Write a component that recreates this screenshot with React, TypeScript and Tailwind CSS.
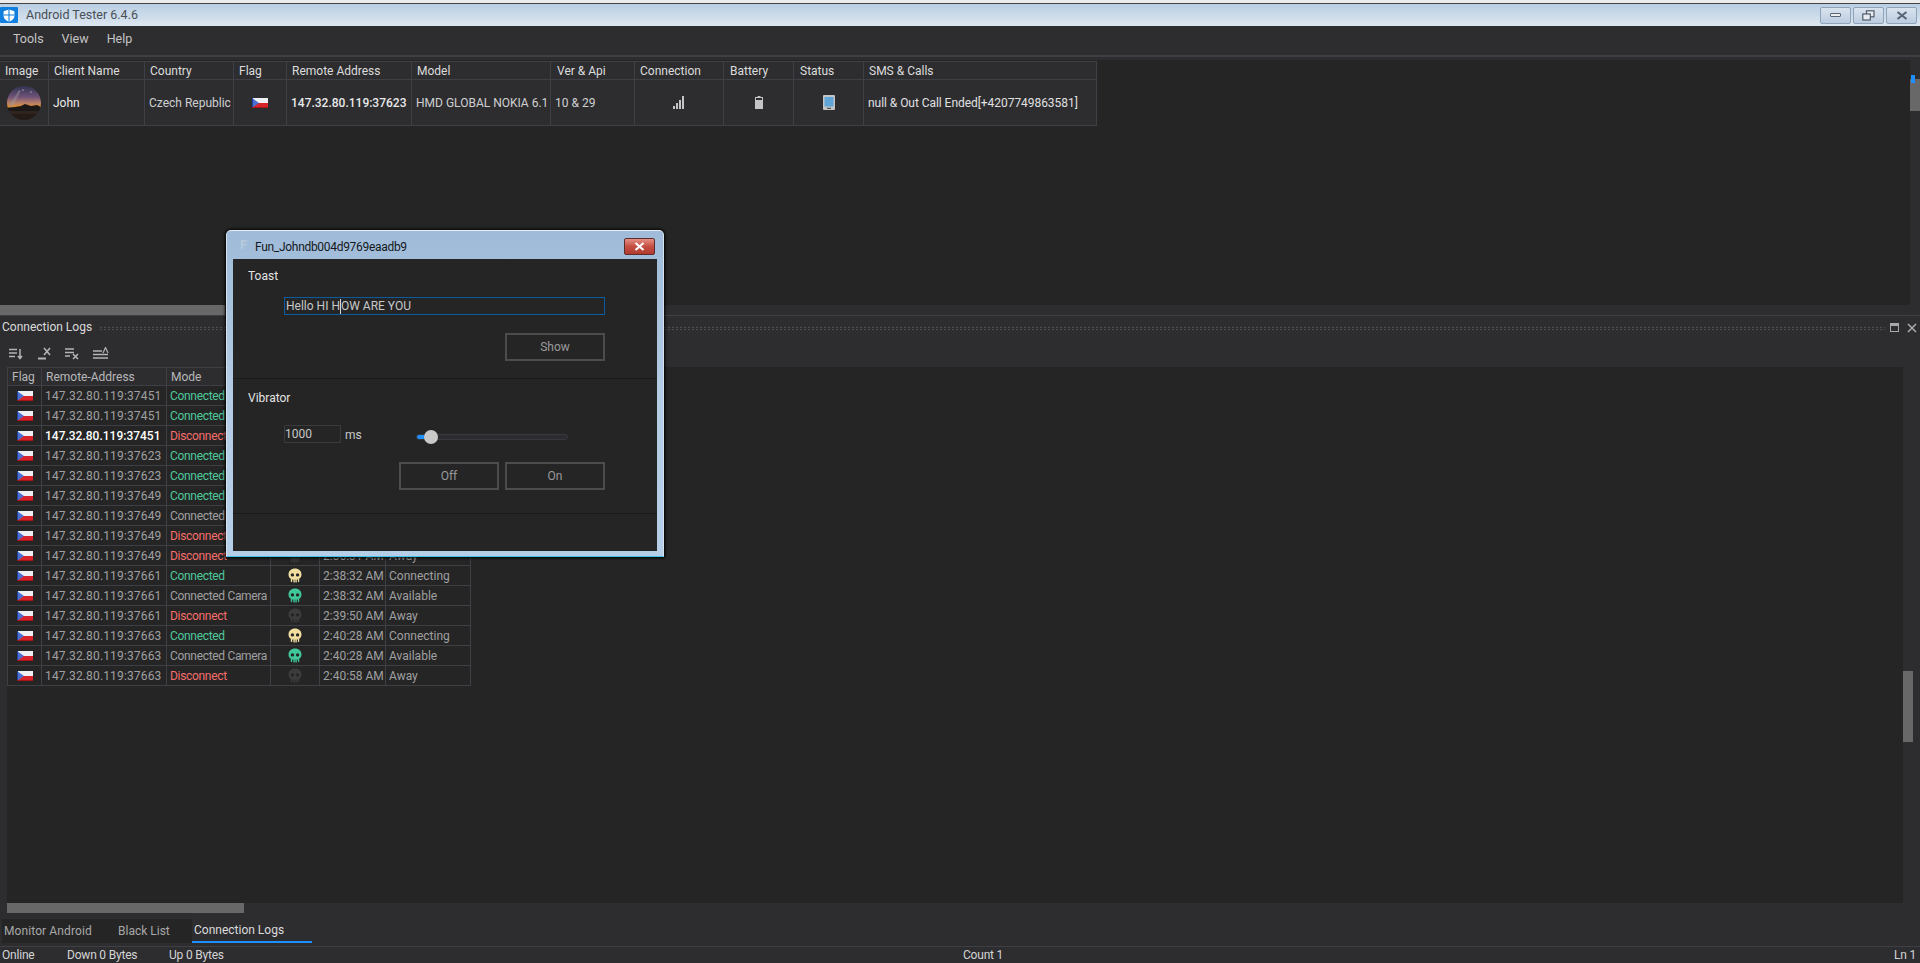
import { Fragment } from 'react'

const HEAD_COLS = [
  { label: 'Image', pad: 'pl-[5px]' },
  { label: 'Client Name', pad: 'pl-[5px]' },
  { label: 'Country', pad: 'pl-[5px]' },
  { label: 'Flag', pad: 'pl-[5px]' },
  { label: 'Remote Address', pad: 'pl-[5px]' },
  { label: 'Model', pad: 'pl-[5px]' },
  { label: 'Ver & Api', pad: 'pl-[6px]' },
  { label: 'Connection', pad: 'pl-[5px]' },
  { label: 'Battery', pad: 'pl-[6px]' },
  { label: 'Status', pad: 'pl-[6px]' },
  { label: 'SMS & Calls', pad: 'pl-[5px]' },
]

const LOG_COLS = ['Flag', 'Remote-Address', 'Mode', '', '', '']

type Log = { addr: string; mode: 'on' | 'cam' | 'off'; time: string; state: string; bold?: boolean }

const LOGS: Log[] = [
  { addr: '37451', mode: 'on', time: '2:31:08 AM', state: 'Connecting' },
  { addr: '37451', mode: 'on', time: '2:31:08 AM', state: 'Connecting' },
  { addr: '37451', mode: 'off', time: '2:32:14 AM', state: 'Away', bold: true },
  { addr: '37623', mode: 'on', time: '2:33:40 AM', state: 'Connecting' },
  { addr: '37623', mode: 'on', time: '2:33:40 AM', state: 'Connecting' },
  { addr: '37649', mode: 'on', time: '2:35:02 AM', state: 'Connecting' },
  { addr: '37649', mode: 'cam', time: '2:35:02 AM', state: 'Available' },
  { addr: '37649', mode: 'off', time: '2:35:58 AM', state: 'Away' },
  { addr: '37649', mode: 'off', time: '2:36:31 AM', state: 'Away' },
  { addr: '37661', mode: 'on', time: '2:38:32 AM', state: 'Connecting' },
  { addr: '37661', mode: 'cam', time: '2:38:32 AM', state: 'Available' },
  { addr: '37661', mode: 'off', time: '2:39:50 AM', state: 'Away' },
  { addr: '37663', mode: 'on', time: '2:40:28 AM', state: 'Connecting' },
  { addr: '37663', mode: 'cam', time: '2:40:28 AM', state: 'Available' },
  { addr: '37663', mode: 'off', time: '2:40:58 AM', state: 'Away' },
]

function Flag() {
  return (
    <svg width="16" height="12" viewBox="0 0 16 12">
      <rect x="0" y="1" width="16" height="5" fill="#eef0f4" />
      <rect x="0" y="6" width="16" height="5" fill="#d8232a" />
      <path d="M0 1 L7 6 L0 11 Z" fill="#4a6fd0" />
      <rect x="0" y="1" width="1" height="10" fill="#1f3f9c" />
      <rect x="0" y="10" width="16" height="1" fill="#a81418" />
    </svg>
  )
}

function Skull({ color }: { color: string }) {
  return (
    <svg width="14" height="15" viewBox="0 0 14 15">
      <path
        fillRule="evenodd"
        fill={color}
        d="M7 0.5C3.2 0.5 0.5 3 0.5 6.5C0.5 8.6 1.5 10 2.8 10.8V13.4C2.8 14.2 4.2 14.2 4.2 13.4V11.6H5.4V14C5.4 14.8 6.8 14.8 6.8 14V11.6H7.4V14C7.4 14.8 8.8 14.8 8.8 14V11.6H9.9V13.4C9.9 14.2 11.2 14.2 11.2 13.4V10.8C12.5 10 13.5 8.6 13.5 6.5C13.5 3 10.8 0.5 7 0.5ZM4.4 5.2A1.7 1.7 0 1 1 4.4 8.6A1.7 1.7 0 1 1 4.4 5.2ZM9.6 5.2A1.7 1.7 0 1 1 9.6 8.6A1.7 1.7 0 1 1 9.6 5.2Z"
      />
    </svg>
  )
}

function Avatar() {
  return (
    <svg width="34" height="34" viewBox="0 0 34 34">
      <defs>
        <linearGradient id="sky" x1="0" y1="0" x2="0" y2="1">
          <stop offset="0" stopColor="#2f3350" />
          <stop offset="0.32" stopColor="#6f5278" />
          <stop offset="0.5" stopColor="#b77f68" />
          <stop offset="0.6" stopColor="#d98c36" />
          <stop offset="0.7" stopColor="#2c2320" />
          <stop offset="1" stopColor="#3a281e" />
        </linearGradient>
        <clipPath id="disc">
          <circle cx="17" cy="17" r="17" />
        </clipPath>
      </defs>
      <g clipPath="url(#disc)">
        <rect width="34" height="34" fill="url(#sky)" />
        <path d="M2 20 L12 4 L14 5 L5 21 Z" fill="#9a9aa0" opacity="0.45" />
        <path d="M0 22 L8 21 L14 20 L18 18 L24 20 L30 19 L34 21 V25 H0 Z" fill="#1c1818" />
        <rect x="0" y="28" width="34" height="6" fill="#241a16" />
        <circle cx="16" cy="4" r="0.6" fill="#fff" />
        <circle cx="24" cy="6" r="0.6" fill="#fff" />
      </g>
    </svg>
  )
}

function LogToolbarIcons() {
  return (
    <div className="flex h-[27px] items-start pl-[9px] pt-[6px]">
      <svg width="14" height="14" viewBox="0 0 14 14" className="text-[#b4b4b4]" stroke="currentColor" fill="none">
        <path d="M0 3.5H8M0 7H8M0 10.5H6M11 3V12M9 10L11 12.5L13 10" strokeWidth="1.5" />
      </svg>
      <svg width="14" height="14" viewBox="0 0 14 14" className="ml-[15px] text-[#b4b4b4]" stroke="currentColor" fill="none">
        <path d="M0 12.5H8" strokeWidth="2" />
        <path d="M6 2L12 9M12 2L6 9" strokeWidth="1.6" />
      </svg>
      <svg width="15" height="14" viewBox="0 0 15 14" className="ml-[13px] text-[#b4b4b4]" stroke="currentColor" fill="none">
        <path d="M0 3H9M0 6.5H9M0 10H5" strokeWidth="1.5" />
        <path d="M8 8L13 13M13 8L8 13" strokeWidth="1.6" />
      </svg>
      <svg width="16" height="14" viewBox="0 0 16 14" className="ml-[13px] mt-[1px] text-[#b4b4b4]" stroke="currentColor" fill="none">
        <path d="M0 4H9M0 7.5H15M0 11H15" strokeWidth="1.5" />
        <path d="M10 6L12.5 0.5L15 6" strokeWidth="1.2" />
      </svg>
    </div>
  )
}

function WinButton({ children }: { children: React.ReactNode }) {
  return (
    <div className="flex h-[17px] w-[31px] items-center justify-center rounded-[2px] border border-[#8fa3bb] bg-gradient-to-b from-[#d9e3ee] to-[#bccde0]">
      {children}
    </div>
  )
}

function DialogButton({ label }: { label: string }) {
  return (
    <div className="flex h-[28px] w-[100px] items-center justify-center border-2 border-[#4c4c4c] text-[#9a9a9a]">{label}</div>
  )
}

function FunDialog() {
  return (
    <div className="absolute left-[226px] top-[230px] h-[327px] w-[438px] rounded-t-[5px] border border-t-[#e8eef5] border-x-[#d5e2ef] border-b-[#3fc3e8] bg-gradient-to-b from-[#9fbbd9] via-[#b4cce4] to-[#b6cfe8] px-[6px] shadow-[0_0_3px_1px_#000]">
      <div className="flex h-[28px] items-center">
        <span className="ml-[7px] w-[15px] text-[13px] font-bold text-[#b7c9dc]">F</span>
        <span className="mt-[4px] text-[12px] tracking-[-0.3px] text-[#15181c]">Fun_Johndb004d9769eaadb9</span>
        <div className="ml-auto mr-[2px] mt-[2px] flex h-[17px] w-[31px] items-center justify-center rounded-[2px] border border-[#5c2b2b] bg-gradient-to-b from-[#e58f85] via-[#c44f42] to-[#b23a2e]">
          <svg width="11" height="9" viewBox="0 0 11 9" stroke="#fff" strokeWidth="2.2">
            <path d="M1.5 1L9.5 8M9.5 1L1.5 8" />
          </svg>
        </div>
      </div>
      <div className="flex h-[292px] flex-col bg-[#252526] text-[12px]">
        <section className="h-[120px] border-b border-[#1a1a1b]">
          <div className="ml-[15px] mt-[9px] h-[16px] leading-[16px] text-[#e4e4e4]">Toast</div>
          <div className="ml-[51px] mt-[13px] flex h-[18px] w-[321px] items-center border border-[#0b5c9e] pl-[1px] text-[#c8c8c8]">
            Hello HI H<span className="h-[15px] w-0 border-l border-[#d8d8d8]" />OW ARE YOU
          </div>
          <div className="ml-[272px] mt-[18px]">
            <DialogButton label="Show" />
          </div>
        </section>
        <section className="h-[135px] border-b border-[#1a1a1b]">
          <div className="ml-[15px] mt-[11px] h-[16px] leading-[16px] text-[#e4e4e4]">Vibrator</div>
          <div className="ml-[51px] mt-[19px] flex h-[18px] items-center">
            <div className="flex h-[18px] w-[57px] items-center border border-[#3a3a3c] text-[#c8c8c8]">1000</div>
            <span className="w-[75px] pl-[4px] pt-[2px] text-[#c8c8c8]">ms</span>
            <div className="relative mt-[6px] h-[6px] w-[152px] rounded-full border border-[#38383e] bg-[#2b2b30]">
              <div className="h-full w-[10px] rounded-l-full bg-[#1e8fff]" />
              <div className="absolute left-[7px] top-[-5px] h-[14px] w-[14px] rounded-full bg-[#c9c9c9]" />
            </div>
          </div>
          <div className="ml-[166px] mt-[19px] flex gap-[6px]">
            <DialogButton label="Off" />
            <DialogButton label="On" />
          </div>
        </section>
      </div>
    </div>
  )
}

export default function App() {
  return (
    <div className="relative flex h-screen w-full flex-col overflow-hidden bg-[#2d2d30] font-['Roboto',sans-serif] text-[12px] text-[#d0d0d0]">
      {/* window frame */}
      <div className="h-[4px] border-b border-[#444] bg-[#ececec]" />
      <div className="flex h-[22px] items-center bg-gradient-to-b from-[#b9cee3] to-[#dde7f0] pr-[3px]">
        <div className="flex h-[16px] w-[18px] items-center justify-center rounded-[1px] bg-[#0f7fe0]">
          <svg width="12" height="13" viewBox="0 0 11 12">
            <path d="M5.5 0.5L10.5 2V6C10.5 9 8 11 5.5 11.7C3 11 0.5 9 0.5 6V2Z" fill="#fff" />
            <path d="M5 0.5H6V11.7H5ZM0.5 5H10.5V6H0.5Z" fill="#0f7fe0" />
          </svg>
        </div>
        <span className="ml-[8px] text-[12.5px] text-[#4a4f55]">Android Tester 6.4.6</span>
        <div className="ml-auto flex gap-[2px]">
          <WinButton>
            <div className="h-[4px] w-[11px] rounded-[1px] border border-[#5a6675] bg-[#eee]" />
          </WinButton>
          <WinButton>
            <svg width="13" height="11" viewBox="0 0 13 11" fill="none" stroke="#4f5a68" strokeWidth="1.2">
              <rect x="4.5" y="0.8" width="7.5" height="6" fill="#e8edf3" />
              <rect x="0.8" y="4" width="7.5" height="6" fill="#e8edf3" />
            </svg>
          </WinButton>
          <WinButton>
            <svg width="12" height="9" viewBox="0 0 12 9" stroke="#5a6675" strokeWidth="2.2">
              <path d="M1.5 1L10.5 8M10.5 1L1.5 8" />
            </svg>
          </WinButton>
        </div>
      </div>

      {/* menu */}
      <div className="flex h-[29px] items-center gap-[18px] pl-[13px] pb-[3px] text-[12.5px] text-[#c4c4c4]">
        <span>Tools</span>
        <span>View</span>
        <span>Help</span>
      </div>
      <div className="h-[2px] bg-[#3f3f46]" />
      <div className="h-[3px]" />

      {/* clients panel */}
      <div className="flex h-[245px]">
        <div className="w-[1910px] bg-[#252526] pt-[1px]">
          <div className="grid w-[1097px] grid-cols-[49px_96px_89px_53px_125px_139px_84px_89px_70px_70px_233px] whitespace-nowrap border-y border-[#3f3f46] bg-[#2d2d30]">
            {HEAD_COLS.map((col) => (
              <div key={col.label} className={`flex h-[18px] items-center border-b border-r border-[#3f3f46] ${col.pad} text-[#dcdcdc]`}>
                {col.label}
              </div>
            ))}
            <div className="flex h-[45px] items-center justify-center border-r border-[#3f3f46]">
              <Avatar />
            </div>
            <div className="flex items-center border-r border-[#3f3f46] pl-[4px] text-[#ececec]">John</div>
            <div className="flex items-center border-r border-[#3f3f46] pl-[4px] text-[#d0d0d0]">Czech Republic</div>
            <div className="flex items-center justify-center border-r border-[#3f3f46]">
              <Flag />
            </div>
            <div className="flex items-center border-r border-[#3f3f46] pl-[4px] font-medium text-[#e8e8e8]">147.32.80.119:37623</div>
            <div className="flex items-center border-r border-[#3f3f46] pl-[4px] text-[#d0d0d0]">HMD GLOBAL NOKIA 6.1</div>
            <div className="flex items-center border-r border-[#3f3f46] pl-[4px] text-[#d0d0d0]">10 &amp; 29</div>
            <div className="flex items-center justify-center border-r border-[#3f3f46]">
              <svg width="12" height="13" viewBox="0 0 12 13" fill="#c4c4c4">
                <rect x="0" y="10" width="2" height="3" />
                <rect x="3" y="7" width="2" height="6" />
                <rect x="6" y="4" width="2" height="9" />
                <rect x="9" y="0" width="2" height="13" />
              </svg>
            </div>
            <div className="flex items-center justify-center border-r border-[#3f3f46]">
              <svg width="8" height="13" viewBox="0 0 8 13" fill="#c4c4c4">
                <rect x="2.5" y="0" width="3" height="1" />
                <path fillRule="evenodd" d="M0 1H8V13H0ZM1 2V4H7V2Z" />
              </svg>
            </div>
            <div className="flex items-center justify-center border-r border-[#3f3f46]">
              <svg width="12" height="15" viewBox="0 0 12 15">
                <rect width="12" height="15" rx="1" fill="#c4c4c4" />
                <rect x="1.5" y="2" width="9" height="9.5" fill="#5fa5d8" />
                <rect x="4" y="12.8" width="4" height="1" fill="#333" />
              </svg>
            </div>
            <div className="flex items-center border-r border-[#3f3f46] pl-[4px] tracking-[-0.05px] text-[#e0e0e0]">null &amp; Out Call Ended[+4207749863581]</div>
          </div>
        </div>
        <div className="relative w-[10px]">
          <div className="mt-[19px] h-[32px] bg-[#686868]" />
          <div className="absolute left-[1px] top-[15px] h-[8px] w-[4px] bg-[#1e8fff]" />
        </div>
      </div>
      <div className="h-[10px]">
        <div className="h-full w-[225px] bg-[#686868]" />
      </div>
      <div className="h-px bg-[#3f3f46]" />

      {/* logs panel */}
      <div className="flex h-[24px] items-center pl-[2px] pr-[3px]">
        <span className="pb-[3px] text-[12px] text-[#dcdcdc]">Connection Logs</span>
        <div className="ml-[7px] mr-[5px] h-[5px] flex-1 bg-[radial-gradient(#5a5a5e_0.7px,transparent_0.8px)] bg-[length:4px_2.5px]" />
        <svg width="10" height="10" viewBox="0 0 10 10" fill="none" stroke="#a8a8a8" className="mr-[7px]">
          <rect x="0.5" y="0.5" width="8" height="8" />
          <rect x="0.5" y="0.5" width="8" height="2" fill="#a8a8a8" />
        </svg>
        <svg width="10" height="10" viewBox="0 0 10 10" stroke="#a8a8a8" strokeWidth="1.6">
          <path d="M1 1L9 9M9 1L1 9" />
        </svg>
      </div>
      <LogToolbarIcons />
      <div className="flex h-[536px] pl-[7px]">
        <div className="w-[1896px] bg-[#252526]">
          <div className="grid w-[463px] grid-cols-[34px_125px_104px_49px_66px_85px] border-l border-[#3f3f46] text-[#a0a0a0]">
            {LOG_COLS.map((col, i) => (
              <div key={i} className="flex h-[19px] items-center border-y border-r border-[#3f3f46] bg-[#2d2d30] pl-[4px] text-[#b8b8b8]">
                {col}
              </div>
            ))}
            {LOGS.map((log, i) => (
              <Fragment key={i}>
                <div className="flex h-[20px] items-center justify-center border-b border-r border-[#3f3f46]">
                  <Flag />
                </div>
                <div className={`flex items-center border-b border-r border-[#3f3f46] pl-[3px] ${log.bold ? 'font-medium text-white' : 'tracking-[0.15px]'}`}>
                  147.32.80.119:{log.addr}
                </div>
                <div
                  className={`flex items-center whitespace-nowrap border-b border-r border-[#3f3f46] pl-[3px] tracking-[-0.32px] ${
                    log.mode === 'on' ? 'text-[#4ec99a]' : log.mode === 'off' ? 'text-[#f56e6a]' : ''
                  }`}
                >
                  {log.mode === 'on' ? 'Connected' : log.mode === 'off' ? 'Disconnect' : 'Connected Camera'}
                </div>
                <div className="flex items-center justify-center border-b border-r border-[#3f3f46]">
                  <Skull color={log.mode === 'on' ? '#f2dfa0' : log.mode === 'off' ? '#3c3c3c' : '#3fc79a'} />
                </div>
                <div className="flex items-center border-b border-r border-[#3f3f46] pl-[3px]">{log.time}</div>
                <div className="flex items-center border-b border-r border-[#3f3f46] pl-[3px]">{log.state}</div>
              </Fragment>
            ))}
          </div>
        </div>
        <div className="w-[10px] pt-[304px]">
          <div className="h-[71px] bg-[#686868]" />
        </div>
      </div>
      <div className="h-[10px] pl-[7px]">
        <div className="h-full w-[237px] bg-[#686868]" />
      </div>

      {/* tabs */}
      <div className="mt-[6px] flex h-[24px] pl-[2px] text-[12px]">
        <div className="flex w-[190px] items-center bg-[#252526] pl-[2px] text-[#a8a8a8]">
          <span className="w-[114px] tracking-[0.1px]">Monitor Android</span>
          <span>Black List</span>
        </div>
        <div className="flex w-[120px] items-center border-b-2 border-[#1e8fff] pl-[2px] text-[#dcdcdc]">Connection Logs</div>
      </div>
      <div className="mt-[3px] flex h-[17px] flex-1 items-center border-t border-[#3f3f46] pl-[2px] pr-[4px] tracking-[-0.2px] text-[#d4d4d4]">
        <span className="w-[65px]">Online</span>
        <span className="w-[102px]">Down 0 Bytes</span>
        <span className="w-[794px]">Up 0 Bytes</span>
        <span>Count 1</span>
        <span className="ml-auto">Ln 1</span>
      </div>

      <FunDialog />
    </div>
  )
}
